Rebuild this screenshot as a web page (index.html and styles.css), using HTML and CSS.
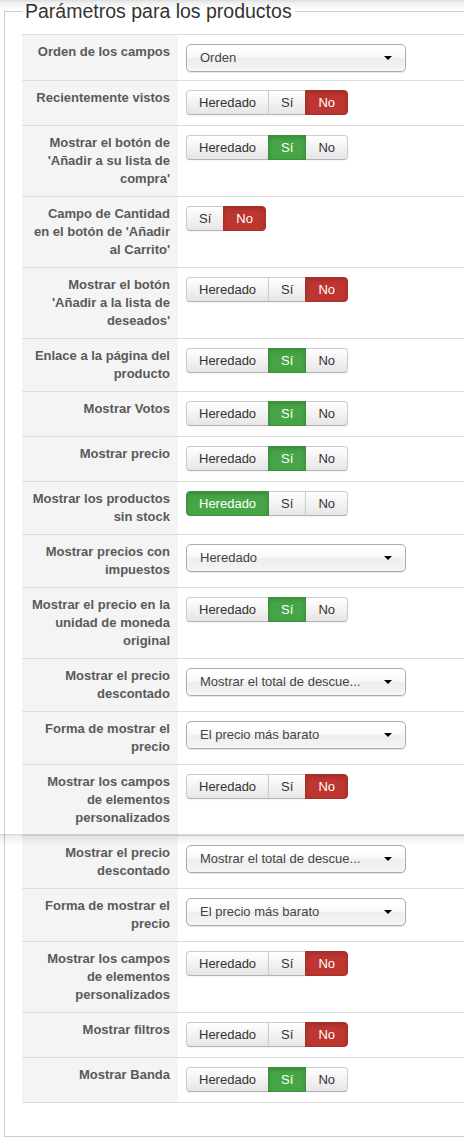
FILE: index.html
```html
<!DOCTYPE html>
<html lang="es">
<head>
  <meta charset="UTF-8">
  <meta name="viewport" content="width=device-width, initial-scale=1.0">
  <title>Parámetros para los productos</title>
  <link rel="stylesheet" href="styles.css">
</head>
<body>
  <!-- header shadow -->
  <div class="shade shade-top"></div>

  <fieldset class="params">
    <legend>Parámetros para los productos</legend>

    <table class="params-table">
      <tr>
        <td class="key">Orden de los campos</td>
        <td class="val"><div class="chzn"><span>Orden</span><b></b></div></td>
      </tr>
      <tr>
        <td class="key">Recientemente vistos</td>
        <td class="val"><div class="btn-group"><label class="btn">Heredado</label><label class="btn">Sí</label><label class="btn btn-danger">No</label></div></td>
      </tr>
      <tr>
        <td class="key">Mostrar el botón de 'Añadir a su lista de compra'</td>
        <td class="val"><div class="btn-group"><label class="btn">Heredado</label><label class="btn btn-success">Sí</label><label class="btn">No</label></div></td>
      </tr>
      <tr>
        <td class="key">Campo de Cantidad en el botón de 'Añadir al Carrito'</td>
        <td class="val"><div class="btn-group"><label class="btn">Sí</label><label class="btn btn-danger">No</label></div></td>
      </tr>
      <tr>
        <td class="key">Mostrar el botón 'Añadir a la lista de deseados'</td>
        <td class="val"><div class="btn-group"><label class="btn">Heredado</label><label class="btn">Sí</label><label class="btn btn-danger">No</label></div></td>
      </tr>
      <tr>
        <td class="key">Enlace a la página del producto</td>
        <td class="val"><div class="btn-group"><label class="btn">Heredado</label><label class="btn btn-success">Sí</label><label class="btn">No</label></div></td>
      </tr>
      <tr>
        <td class="key">Mostrar Votos</td>
        <td class="val"><div class="btn-group"><label class="btn">Heredado</label><label class="btn btn-success">Sí</label><label class="btn">No</label></div></td>
      </tr>
      <tr>
        <td class="key">Mostrar precio</td>
        <td class="val"><div class="btn-group"><label class="btn">Heredado</label><label class="btn btn-success">Sí</label><label class="btn">No</label></div></td>
      </tr>
      <tr>
        <td class="key">Mostrar los productos sin stock</td>
        <td class="val"><div class="btn-group"><label class="btn btn-success">Heredado</label><label class="btn">Sí</label><label class="btn">No</label></div></td>
      </tr>
      <tr>
        <td class="key">Mostrar precios con impuestos</td>
        <td class="val"><div class="chzn"><span>Heredado</span><b></b></div></td>
      </tr>
      <tr>
        <td class="key">Mostrar el precio en la unidad de moneda original</td>
        <td class="val"><div class="btn-group"><label class="btn">Heredado</label><label class="btn btn-success">Sí</label><label class="btn">No</label></div></td>
      </tr>
      <tr>
        <td class="key">Mostrar el precio descontado</td>
        <td class="val"><div class="chzn"><span>Mostrar el total de descue...</span><b></b></div></td>
      </tr>
      <tr>
        <td class="key">Forma de mostrar el precio</td>
        <td class="val"><div class="chzn"><span>El precio más barato</span><b></b></div></td>
      </tr>
      <tr>
        <td class="key">Mostrar los campos de elementos personalizados</td>
        <td class="val"><div class="btn-group"><label class="btn">Heredado</label><label class="btn">Sí</label><label class="btn btn-danger">No</label></div></td>
      </tr>
      <tr>
        <td class="key">Mostrar el precio descontado</td>
        <td class="val"><div class="chzn"><span>Mostrar el total de descue...</span><b></b></div></td>
      </tr>
      <tr>
        <td class="key">Forma de mostrar el precio</td>
        <td class="val"><div class="chzn"><span>El precio más barato</span><b></b></div></td>
      </tr>
      <tr>
        <td class="key">Mostrar los campos de elementos personalizados</td>
        <td class="val"><div class="btn-group"><label class="btn">Heredado</label><label class="btn">Sí</label><label class="btn btn-danger">No</label></div></td>
      </tr>
      <tr>
        <td class="key">Mostrar filtros</td>
        <td class="val"><div class="btn-group"><label class="btn">Heredado</label><label class="btn">Sí</label><label class="btn btn-danger">No</label></div></td>
      </tr>
      <tr>
        <td class="key">Mostrar Banda</td>
        <td class="val"><div class="btn-group"><label class="btn">Heredado</label><label class="btn btn-success">Sí</label><label class="btn">No</label></div></td>
      </tr>
    </table>
  </fieldset>

  <!-- second capture starts here -->
  <div class="shade shade-seam"></div>
</body>
</html>
```

FILE: styles.css
```css
/* General Styles */
html, body {
  overflow: hidden;
}

body {
  margin: 0;
  position: relative;
  background: #fff;
  font-family: "Liberation Sans", Arial, sans-serif;
  font-size: 13px;
  color: #333;
}

/* Shadows from the header bar */
.shade {
  position: absolute;
  left: 0;
  right: 0;
  height: 12px;
  pointer-events: none;
}

.shade-top {
  top: 0;
  height: 10px;
  background: linear-gradient(rgba(0, 0, 0, 0.13), rgba(0, 0, 0, 0.06) 3px, rgba(0, 0, 0, 0));
}

.shade-seam {
  top: 834px;
  background: linear-gradient(rgba(0, 0, 0, 0.16), rgba(0, 0, 0, 0.07) 2px, rgba(0, 0, 0, 0));
}

/* Fieldset (its right edge is outside the capture) */
.params {
  margin: 0 0 0 4px;
  padding: 12px 0 33px 17px;
  border: 1px solid #ccc;
  border-right: 0;
  min-width: 0;
}

.params legend {
  padding: 0 3px;
  font-size: 19.5px;
  line-height: 22px;
  color: #333;
}

/* Table */
.params-table {
  width: 100%;
  border-collapse: collapse;
  border-spacing: 0;
  border-bottom: 1px solid #ddd;
}

.params-table td {
  border-top: 1px solid #ddd;
  vertical-align: top;
  line-height: 18px;
}

.params-table .key {
  width: 139px;
  padding: 8px 8px 8px 9px;
  background: #f4f4f4;
  text-align: right;
  font-weight: bold;
  color: #5a5a5a;
}

.params-table .val {
  padding: 8px;
}

/* Toggle buttons */
.btn-group {
  display: inline-flex;
  margin: 1px 0 2px;
}

.btn {
  display: block;
  padding: 3px 12px;
  line-height: 17px;
  font-size: 13px;
  color: #333;
  background: linear-gradient(#fff, #e6e6e6);
  border: 1px solid #ccc;
  border-bottom-color: #b3b3b3;
  box-shadow: inset 0 1px 0 rgba(255, 255, 255, 0.2), 0 1px 2px rgba(0, 0, 0, 0.05);
}

.btn + .btn {
  margin-left: -1px;
}

.btn:first-child {
  border-radius: 4px 0 0 4px;
}

.btn:last-child {
  border-radius: 0 4px 4px 0;
}

.btn-success {
  position: relative;
  background: #46a546;
  border-color: #3c903c;
  color: #fff;
  box-shadow: inset 0 2px 4px rgba(0, 0, 0, 0.15);
}

.btn-danger {
  position: relative;
  background: #bd362f;
  border-color: #a52f29;
  color: #fff;
  box-shadow: inset 0 2px 4px rgba(0, 0, 0, 0.15);
}

/* Chosen-style select */
.chzn {
  position: relative;
  box-sizing: border-box;
  width: 220px;
  height: 28px;
  margin-top: 1px;
  padding-left: 13px;
  border: 1px solid #aaa;
  border-radius: 5px;
  background: linear-gradient(#fff 20%, #f6f6f6 50%, #eee 52%, #f4f4f4 100%);
  box-shadow: inset 0 0 3px #fff, 0 1px 1px rgba(0, 0, 0, 0.1);
  line-height: 26px;
  font-size: 13px;
  color: #444;
  white-space: nowrap;
}

.chzn b {
  position: absolute;
  right: 13px;
  top: 11px;
  width: 0;
  height: 0;
  border-top: 4px solid #000;
  border-left: 4px solid transparent;
  border-right: 4px solid transparent;
}
```
